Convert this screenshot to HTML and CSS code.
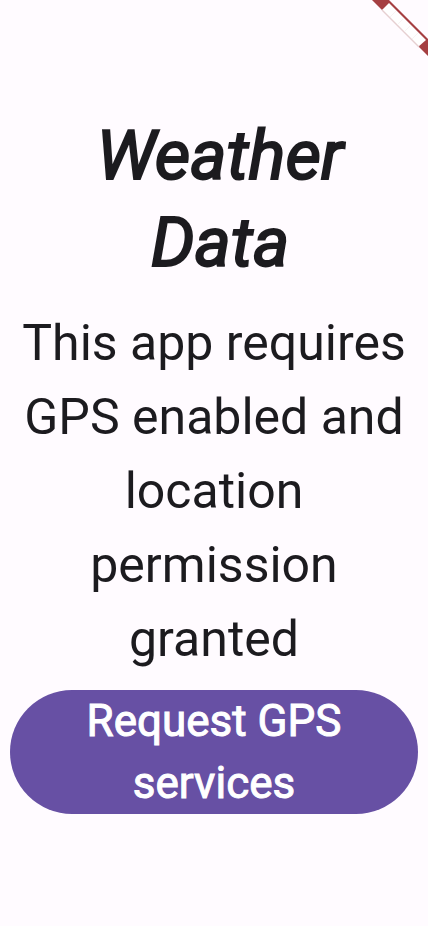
FILE: index.html
```html
<!DOCTYPE html>
<html lang="en">
<head>
<meta charset="utf-8">
<meta name="viewport" content="width=device-width, initial-scale=1">
<title>Weather Data</title>
<link rel="stylesheet" href="styles.css">
</head>
<body>
<main class="screen">
  <h1 class="title">Weather Data</h1>
  <p class="message">This app requires GPS enabled and location permission granted</p>
  <button class="request" type="button">Request GPS services</button>
</main>
<svg class="banner" viewBox="0 0 56 56" aria-hidden="true">
  <path d="M0 0H17L56 39V56Z" fill="#a53f42"/>
  <path d="M17 3L54 40L46 47L10 10Z" fill="#fff"/>
  <path d="M10 10L47 47" stroke="#e6cfd1" stroke-width="1.4"/>
  <path d="M24 11L18 17M31 19L25 25M38 26L32 32M46 33L40 39" stroke="#f3ecec" stroke-width=".6"/>
</svg>
</body>
</html>
```
FILE: styles.css
```css
* {
  box-sizing: border-box;
}

body {
  margin: 0;
  background: #fffbff;
  color: #1c1b1f;
  font-family: Roboto, sans-serif;
}

.screen {
  min-height: 100vh;
  padding: 10px;
  display: flex;
  flex-direction: column;
  justify-content: center;
  text-align: center;
}

.title {
  margin: 0 0 20px;
  padding: 0 32px 0 44px;
  font-size: 69px;
  line-height: 87px;
  font-weight: 400;
  font-style: italic;
  -webkit-text-stroke: 2px currentColor;
}

.message {
  margin: 0 0 14px;
  font-size: 50px;
  line-height: 74px;
}

.request {
  border: 0;
  border-radius: 62px;
  padding: 0 24px;
  background: #6750a4;
  color: #fff;
  font: 400 44px/62px Roboto, sans-serif;
  -webkit-text-stroke: 1px currentColor;
}

.banner {
  position: absolute;
  top: 0;
  right: 0;
  width: 56px;
  height: 56px;
}
```
